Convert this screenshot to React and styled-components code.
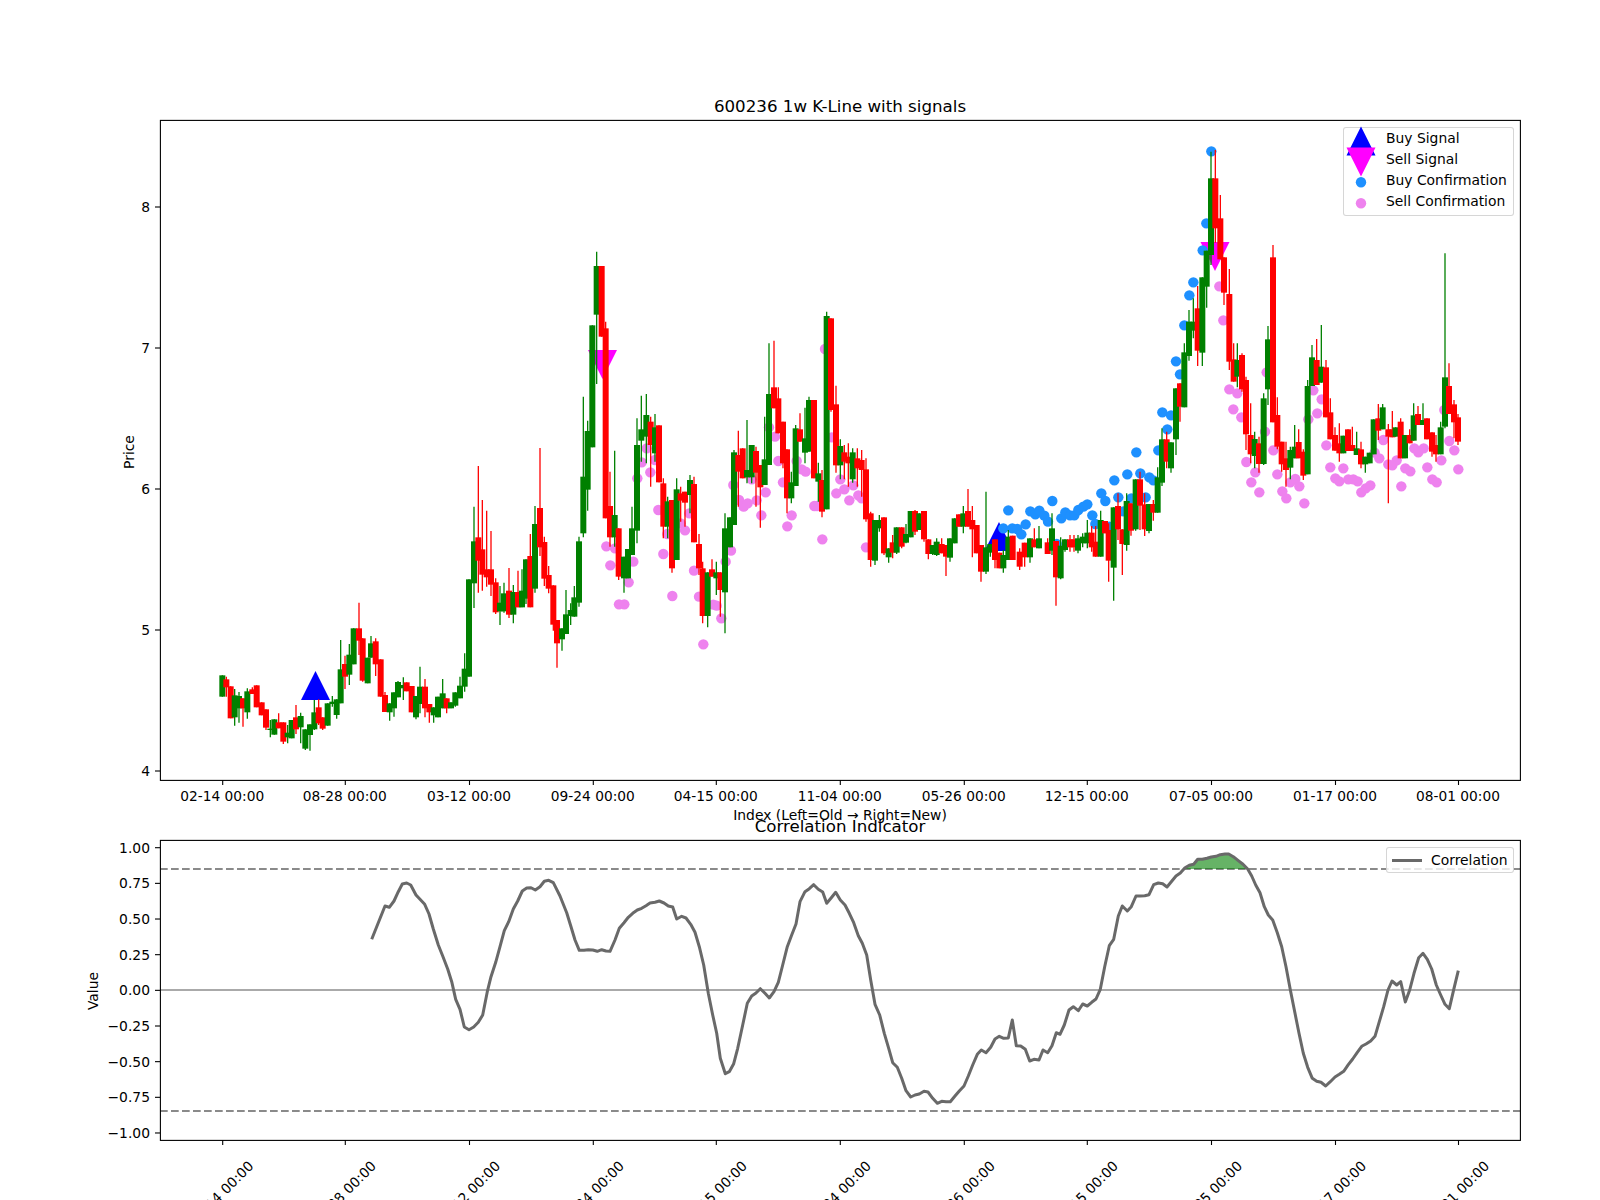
import styled, { createGlobalStyle } from "styled-components";

const GlobalStyle = createGlobalStyle`
html, body {
  margin: 0;
  padding: 0;
  background: #ffffff;
  overflow: hidden;
}
`

const Figure = styled.main`
display: flex;
flex-direction: column;
width: 1600px;
height: 1200px;
overflow: hidden;
background: #ffffff;
font-family: "DejaVu Sans", sans-serif;
`

const Panel = styled.section`
position: relative;
flex: none;
width: 1600px;
height: ${props => props.$height}px;
`

const ChartSvg = styled.svg`
display: block;
width: 1600px;
height: 100%;
overflow: visible;
`

const ChartText = styled.text`
font-family: "DejaVu Sans", sans-serif;
font-size: ${props => props.$size || 13.89}px;
text-anchor: ${props => props.$anchor || "middle"};
dominant-baseline: central;
fill: #000000;
`

const Legend = styled.div`
position: absolute;
top: ${props => props.$top}px;
left: ${props => props.$left}px;
box-sizing: border-box;
width: ${props => props.$width}px;
height: ${props => props.$h}px;
display: flex;
flex-direction: column;
background: rgba(255, 255, 255, 0.8);
border: 1px solid rgba(204, 204, 204, 0.8);
border-radius: 3px;
`

const LegendRow = styled.div`
display: flex;
align-items: center;
gap: ${props => props.$gap}px;
height: ${props => props.$rowHeight}px;
padding-left: ${props => props.$pad}px;
font-size: 13.89px;
line-height: 16px;
color: #000000;
white-space: nowrap;
`

const Swatch = styled.svg`
flex: none;
width: ${props => props.$w}px;
height: 21px;
overflow: visible;
`

// pixel readings of the candles: x color bodyTop bodyBottom wickTop wickBottom
const parseRows = (ox, oy, text) =>
  text.trim().split("\n").map(line => {
    const [x, c, t, b, wt, wb] = line.trim().split(" ");
    return {
      x: ox + x / 3,
      color: c === "g" ? "#008000" : "#ff0000",
      top: oy + t / 3,
      bottom: oy + b / 3,
      wickTop: oy + wt / 3,
      wickBottom: oy + wb / 3,
    };
  });

const candles = [
  ...parseRows(150, 480, `
217 g 586 650 586 650
229 r 598 622 590 650
242 r 619 715 619 715
254 g 646 712 627 737
267 g 648 685 636 728
279 r 655 685 655 740
292 g 634 697 625 716
307 r 628 642 622 642
320 r 616 682 616 682
335 r 667 706 667 706
348 r 688 743 688 750
361 g 746 750 720 772
373 g 718 764 718 764
386 r 727 745 700 745
400 r 727 785 727 792
413 g 758 772 735 790
425 g 720 775 720 775
438 r 712 748 675 762
452 g 708 742 698 790
466 g 748 806 748 810
480 g 733 765 733 812
493 g 697 748 660 750
506 r 682 730 658 735
518 r 712 746 712 750
533 g 670 737 670 737
547 g 665 672 648 680
560 g 658 705 658 716
572 g 568 670 480 670
585 r 552 590 527 627
598 g 524 584 492 615
611 g 445 553 445 553
627 r 445 482 368 525
638 r 475 602 475 605
653 g 533 610 533 610
663 g 490 533 468 533
677 r 484 553 475 588
692 r 538 650 538 650
705 r 645 696 636 696
719 g 670 697 670 722
732 g 637 685 637 710
744 g 606 652 603 652
760 g 615 625 592 660
770 r 607 634 607 634
785 r 618 697 618 697
798 g 648 712 648 718
810 g 620 672 560 700
825 r 620 685 597 712
838 r 672 697 672 728
851 g 682 706 682 728
864 g 650 712 650 712
878 g 640 685 597 685
890 r 655 685 655 700
903 g 667 685 667 685
916 g 637 677 637 680
930 g 617 655 590 655
944 g 566 620 520 635
957 g 298 590 298 590`),
  ...parseRows(450, 240, `
72 g 904 1030 800 1104
85 r 892 962 678 1058
97 r 928 1004 780 1052
110 r 988 1012 812 1040
123 r 988 1034 873 1068
137 r 1027 1117 1015 1122
150 g 1088 1114 1038 1155
162 g 1060 1114 1028 1118
177 r 1052 1124 984 1134
190 g 1056 1124 1035 1150
204 r 1056 1102 992 1102
216 g 1052 1102 988 1102
228 g 958 1076 958 1092
241 r 948 1102 882 1102
255 g 852 1046 798 1058
270 r 804 922 624 948
283 r 906 1016 890 1038
296 r 1005 1046 978 1060
310 r 1036 1154 1036 1172`),
  ...parseRows(550, 230, `
21 r 1170 1240 1170 1313
36 g 1195 1228 1195 1262
48 g 1153 1212 1080 1212
62 g 1140 1158 1120 1185
73 g 1102 1160 1068 1160
87 g 934 1118 920 1130
100 g 740 910 500 922
113 g 603 779 572 842
127 g 286 652 286 652
140 g 108 254 65 462
155 r 108 320 108 320
167 r 295 865 275 865
180 r 828 922 725 950
194 g 855 922 662 950
206 r 895 1040 895 1050
222 g 980 1045 980 1088
234 g 957 1045 957 1045
246 g 895 975 830 975
261 g 645 902 565 940
274 g 598 632 497 695
289 g 555 620 492 700
302 r 575 645 560 770
315 g 592 670 552 695
327 r 586 757 586 757
340 r 760 890 745 925
353 g 814 890 800 925
366 r 810 1015 810 1028
380 g 778 990 745 990
392 r 790 812 770 875
405 r 785 818 785 890
420 g 750 795 735 850
432 r 762 937 740 937
447 r 942 1015 912 1035
458 r 1015 1158 995 1180
473 g 1027 1158 1027 1192
486 r 1018 1040 988 1040
499 g 1027 1045 995 1095
511 r 1027 1080 1027 1160
525 g 895 1087 850 1210
540 g 862 952 862 952
552 g 667 885 660 885
565 r 675 725 602 830
578 r 655 745 655 745
591 g 720 742 570 760
605 g 645 742 645 760
618 r 663 728 650 830
631 r 705 772 705 893
644 g 688 765 560 765
657 g 492 705 340 705
672 r 472 535 332 535
685 r 505 610 472 610
699 r 575 700 575 715
711 r 658 805 658 850
724 g 757 805 725 820
737 g 595 768 585 768
750 r 598 635 550 635
765 g 625 668 533 700
777 g 510 665 500 665
792 r 510 745 510 745
805 g 730 755 698 815
816 r 750 845 720 862
830 g 258 838 245 838
843 r 265 540 265 545
858 r 523 706 467 728
871 g 648 706 628 748
883 r 667 695 645 748
895 r 680 700 640 770
908 g 667 748 655 758
922 r 685 715 655 770
935 r 690 720 660 800
948 r 718 868 685 875
962 r 850 990 845 1010
975 g 870 992 870 1005
988 g 870 895 855 905
1002 r 862 970 862 975
1016 g 955 982 955 998
1028 r 937 968 915 985
1040 g 892 968 892 972
1055 r 892 950 892 955
1068 g 912 938 882 940
1082 g 843 922 843 922
1095 r 843 905 840 915
1108 g 850 900 850 900
1122 r 843 928 843 935
1135 r 928 972 928 988
1148 g 945 972 945 975
1160 g 935 975 925 978
1175 r 942 970 925 970
1188 r 945 980 945 1038`),
  ...parseRows(950, 120, `
0 g 1255 1313 1255 1325
14 g 1195 1270 1195 1270
27 r 1183 1220 1183 1220
40 g 1180 1220 1158 1240
54 r 1173 1220 1107 1220
67 r 1200 1228 1158 1312
80 r 1215 1300 1215 1300
93 r 1275 1355 1275 1385
108 g 1282 1355 1115 1362
121 g 1272 1298 1272 1310
135 r 1258 1320 1258 1345
148 r 1298 1345 1298 1345
160 g 1305 1345 1290 1358
175 g 1250 1320 1230 1320
188 r 1247 1320 1247 1320
209 r 1295 1340 1285 1350
224 r 1268 1312 1268 1340
240 g 1255 1312 1255 1328
253 r 1258 1282 1225 1282
267 g 1255 1285 1218 1285`),
  ...parseRows(1040, 440, `
23 r 307 342 295 342
36 g 265 332 220 345
48 r 303 412 303 497
62 g 317 415 292 418
75 g 298 330 298 335
90 r 298 322 285 335
102 r 298 322 285 335
114 g 295 332 285 340
128 g 290 310 280 322
142 g 278 310 240 325
155 r 278 322 258 335
167 r 305 350 258 350
182 g 240 350 212 350
195 r 243 280 243 280
206 r 270 362 250 425
221 g 202 383 202 482
234 r 198 268 160 300
247 r 268 312 268 405
260 g 183 315 160 332
273 r 190 272 190 287
287 g 118 268 118 272
300 r 118 197 95 270
314 r 193 268 160 288
327 g 192 273 192 280
340 r 192 218 180 242
353 g 112 218 82 218`),
  ...parseRows(950, 120, `
636 g 958 1088 925 1098
650 r 958 1025 935 1045
663 g 967 1045 967 1058
678 g 805 958 805 1005
690 r 790 860 790 905
703 g 697 862 670 862
717 g 605 708 570 722
730 g 605 632 535 655
743 r 565 692 498 738
757 g 472 698 472 738
770 g 392 500 392 563
783 g 175 405 95 435
796 r 175 325 90 368
811 r 295 418 225 418
822 r 412 518 412 555
838 r 522 725 447 750
851 r 718 785 670 785`),
  ...parseRows(1200, 110, `
112 g 750 800 700 832
126 r 735 838 730 845
138 r 810 973 800 1020
152 r 975 1033 880 1060
164 g 987 1038 965 1075
177 r 1000 1062 980 1088
191 g 865 1062 850 1065
204 g 688 838 648 885
219 r 442 937 405 937
232 r 915 1010 862 1018
245 r 995 1063 995 1085
258 r 1045 1080 995 1130
271 g 1020 1073 1010 1108
284 g 1010 1045 945 1045
296 r 996 1045 958 1045
310 r 1025 1097 1018 1110
323 g 828 1093 810 1093
336 g 742 828 705 828
350 r 750 825 687 825
364 g 770 818 645 818
378 r 772 922 750 922
391 r 907 988 865 988
405 r 975 1022 952 1022
418 r 1000 1030 940 1055
430 g 977 1030 977 1030
444 r 958 1023 958 1023
457 r 1005 1023 950 1023
470 g 1015 1035 965 1035
483 r 1018 1063 995 1075
496 g 1040 1063 1040 1088
509 g 1028 1060 1028 1060
521 g 928 1033 928 1033
535 r 925 962 882 990
548 g 892 958 882 958
565 r 958 980 942 1180
577 r 958 982 903 982
587 g 952 980 952 980
602 r 935 1045 925 1045
615 g 975 1045 975 1045
629 r 975 1000 958 1000
641 g 916 992 880 992
654 r 912 945 888 945
669 g 930 945 880 945
681 r 925 988 925 988
696 r 967 1025 967 1040
708 r 1005 1033 975 1055
722 g 952 1033 935 1033
735 g 802 950 430 955
747 r 828 912 760 912
762 r 883 937 870 985
774 r 922 995 912 1005`),
];

const parsePoints = (ox, oy, text) =>
  text.trim().split(/\s+/).map(pair => {
    const [x, y] = pair.split(",");
    return [ox + x / 3, oy + y / 3];
  });

const sellDots = [
  ...parsePoints(550, 230, `169,949 181,1006 195,955 207,1123 223,1123 236,1057 250,995 262,745 275,697 290,655 301,727 315,690 325,840 340,972 352,912 367,1098 392,880 405,901 418,850 432,1022 447,1100 460,1243 490,1124 500,1127 514,1165 527,995 543,962 550,765 567,810 581,830 593,820 605,748 620,811 634,856 647,787 657,592 675,620 685,693 699,757 712,889 725,856 740,693 755,718 767,725 793,828 801,828 817,928 825,357 845,622 859,790 871,748 883,778 898,811 910,766 925,796 935,805 948,952`),
  ...parsePoints(1200, 110, `58,529 70,631 88,838 112,850 100,898 124,922 139,1056 166,1087 154,1117 178,1147 195,965 200,787 220,1021 232,1093 247,1144 259,1165 271,1117 286,1107 298,1129 313,1180 325,928 340,841 352,910 365,868 379,1006 391,1072 406,1105 418,1114 430,1075 445,1108 460,1108 473,1114 484,1147 497,1135 511,1126 524,1028 538,1045 550,990 565,1063 577,1066 590,1051 604,1129 616,1075 631,1084 643,1015 655,1027 671,1015 682,1072 697,1108 710,1117 724,1051 733,900 748,993 763,1021 775,1078`),
];

const buyDots = parsePoints(950, 120, `175,1171 160,1225 187,1225 202,1227 214,1243 227,1213 241,1174 256,1183 268,1172 283,1187 294,1205 307,1143 320,1272 334,1195 346,1177 360,1186 373,1186 385,1170 400,1160 412,1153 427,1186 436,1212 454,1120 466,1143 478,1220 493,1081 505,1132 520,1174 532,1063 544,1135 559,997 571,1060 587,1132 598,1072 610,1081 625,991 637,877 652,928 663,886 678,724 690,763 703,616 718,526 730,487 758,391 769,310 784,94`);

const correlation = [
  ...parsePoints(60, 770, `935,508 950,470 975,408 988,412 1002,393 1015,365 1027,342 1040,339 1052,345 1068,375 1080,388 1094,403 1107,432 1120,477 1135,525 1148,558 1163,597 1175,635 1187,688 1200,718 1213,771 1227,779 1241,771 1255,757 1268,735 1282,665 1293,620 1307,577 1320,530 1333,482 1346,455 1360,417 1373,393 1387,363 1400,354 1413,353 1426,360 1440,350 1453,334 1466,331 1480,338`),
  ...parsePoints(560, 770, `0,378 20,428 33,470 45,510 58,541 72,541 85,539 98,540 112,544 125,539 138,543 150,544 165,510 178,475 192,458 205,442 218,430 232,420 245,415 258,407 270,399 285,397 298,393 312,399 325,408 338,411 350,447 365,439 378,444 392,463 405,487 418,530 431,585 445,670 458,735 470,790 481,865 496,911 508,905 521,881 533,835 548,765 562,700 575,678 588,669 601,656 615,670 628,684 642,665 655,637 668,585 682,530 695,495 708,462 720,395 735,365 748,356 761,344 775,358 788,366 800,400 814,383 827,367 841,390 855,405 868,430 881,458 895,497 907,520 920,555 932,630 945,703 959,735 973,790 986,835 998,878 1012,892 1025,925 1038,962 1052,981 1065,975 1078,972 1092,964 1104,966 1118,985 1132,1000 1145,994 1158,995 1171,995 1185,978 1198,963 1212,948 1225,918 1238,885 1252,853 1264,840 1278,848 1292,832 1305,807 1318,799 1331,805 1345,804 1357,750 1369,827 1382,828 1396,838 1409,873 1422,868 1437,870 1449,840 1463,848 1476,827 1489,788`),
  ...parsePoints(1060, 770, `0,793 13,765 27,720 40,710 55,722 68,702 82,708 95,697 108,687 121,658 134,590 148,527 161,508 175,438 187,408 202,423 214,410 228,378 241,378 254,377 267,374 281,344 295,339 308,341 321,351 335,334 348,318 361,309 375,293 388,286 401,283 413,268 427,268 441,265 454,261 468,259 481,254 495,252 506,252 520,260 535,272 549,283 563,297 575,318 587,345 600,368 613,410 625,435 638,450 652,488 665,530 678,590 692,665 705,730 717,790 730,850 743,892 757,925 770,934 783,937 797,948 811,935 825,921 838,913 851,904 865,884 878,867 892,847 905,829 918,822 932,813 945,799 958,755 971,710 984,660 996,633 1010,645 1022,635 1036,696 1049,660 1062,610 1076,563 1089,550 1102,568 1115,597 1129,645 1142,675 1155,703 1168,716 1182,655 1195,602`),
];

const toPath = points => points.map(p => `${p[0].toFixed(1)},${p[1].toFixed(1)}`).join(" ");

const overThreshold = correlation.filter(p => p[1] <= 869);
const fillPoints = [
  [overThreshold[0][0], 869],
  ...overThreshold,
  [overThreshold[overThreshold.length - 1][0], 869],
];

const xTicks = [
  [222.7, "02-14"], [345.3, "08-28"], [469.5, "03-12"], [593.3, "09-24"],
  [716.3, "04-15"], [840.3, "11-04"], [964.3, "05-26"], [1087.3, "12-15"],
  [1211.5, "07-05"], [1335.5, "01-17"], [1458.5, "08-01"],
];

const priceTicks = [4, 5, 6, 7, 8];
const valueTicks = ["1.00", "0.75", "0.50", "0.25", "0.00", "−0.25", "−0.50", "−0.75", "−1.00"];

const priceY = p => 771 - 141 * (p - 4);
const valueY = i => 847.7 + 35.66 * i;

function UpTriangle({ cx, top }) {
  return <polygon points={`${cx},${top} ${cx + 14.5},${top + 29} ${cx - 14.5},${top + 29}`} fill="#0000ff" />;
}

function DownTriangle({ cx, top }) {
  return <polygon points={`${cx - 14.5},${top} ${cx + 14.5},${top} ${cx},${top + 29}`} fill="#ff00ff" />;
}

function PriceChart() {
  return (
    <Panel $height={825}>
      <ChartSvg viewBox="0 0 1600 825">
        <ChartText x={840} y={106} $size={16.67}>600236 1w K-Line with signals</ChartText>

        <UpTriangle cx={315.5} top={671} />
        <UpTriangle cx={999} top={522} />
        <DownTriangle cx={602.5} top={350} />
        <DownTriangle cx={1215} top={242} />

        {sellDots.map((d, i) => <circle key={i} cx={d[0]} cy={d[1]} r={5.2} fill="#ee82ee" />)}
        {buyDots.map((d, i) => <circle key={i} cx={d[0]} cy={d[1]} r={5.2} fill="#1e90ff" />)}

        {candles.map((c, i) => (
          <g key={i} fill={c.color}>
            <line x1={c.x} x2={c.x} y1={c.wickTop} y2={c.wickBottom} stroke={c.color} strokeWidth={1.3} />
            <rect x={c.x - 3} y={c.top} width={6} height={c.bottom - c.top} />
          </g>
        ))}

        <rect x={160.4} y={120.4} width={1360} height={660} fill="none" stroke="#000000" strokeWidth={1.1} />

        {priceTicks.map(p => (
          <g key={p}>
            <line x1={155} x2={160} y1={priceY(p)} y2={priceY(p)} stroke="#000000" strokeWidth={1.1} />
            <ChartText x={150} y={priceY(p) + 0.4} $anchor="end">{p}</ChartText>
          </g>
        ))}
        {xTicks.map(([x, label]) => (
          <g key={x}>
            <line x1={x} x2={x} y1={780} y2={785} stroke="#000000" strokeWidth={1.1} />
            <ChartText x={x - 0.5} y={796} $size={13.75}>{label} 00:00</ChartText>
          </g>
        ))}

        <ChartText x={128.5} y={452} transform="rotate(-90 128.5 452)">Price</ChartText>
        <ChartText x={840} y={815}>Index (Left=Old → Right=New)</ChartText>
      </ChartSvg>

      <Legend $top={126.5} $left={1342.5} $width={171} $h={89}>
        <LegendRow $rowHeight={21} $pad={3.5} $gap={11}>
          <Swatch $w={28} viewBox="0 0 28 21"><polygon points="14,-1.5 28.5,27.5 -0.5,27.5" fill="#0000ff" /></Swatch>
          Buy Signal
        </LegendRow>
        <LegendRow $rowHeight={21} $pad={3.5} $gap={11}>
          <Swatch $w={28} viewBox="0 0 28 21"><polygon points="-0.5,-1.5 28.5,-1.5 14,27.5" fill="#ff00ff" /></Swatch>
          Sell Signal
        </LegendRow>
        <LegendRow $rowHeight={21} $pad={3.5} $gap={11}>
          <Swatch $w={28} viewBox="0 0 28 21"><circle cx={14} cy={12.2} r={5.2} fill="#1e90ff" /></Swatch>
          Buy Confirmation
        </LegendRow>
        <LegendRow $rowHeight={21} $pad={3.5} $gap={11}>
          <Swatch $w={28} viewBox="0 0 28 21"><circle cx={14} cy={12.2} r={5.2} fill="#ee82ee" /></Swatch>
          Sell Confirmation
        </LegendRow>
      </Legend>
    </Panel>
  );
}

function CorrelationChart() {
  return (
    <Panel $height={375}>
      <ChartSvg viewBox="0 825 1600 375">
        <ChartText x={840} y={826} $size={16.67}>Correlation Indicator</ChartText>

        <line x1={160} x2={1520} y1={869} y2={869} stroke="#8a8a8a" strokeWidth={2.1} strokeDasharray="7.7 3.3" />
        <line x1={160} x2={1520} y1={1111} y2={1111} stroke="#8a8a8a" strokeWidth={2.1} strokeDasharray="7.7 3.3" />
        <line x1={160} x2={1520} y1={990} y2={990} stroke="#aaaaaa" strokeWidth={2.2} />

        <polygon points={toPath(fillPoints)} fill="#008000" opacity={0.6} />
        <polyline points={toPath(correlation)} fill="none" stroke="#696969" strokeWidth={3} strokeLinejoin="round" />

        <rect x={160.4} y={840.4} width={1360} height={300} fill="none" stroke="#000000" strokeWidth={1.1} />

        {valueTicks.map((label, i) => (
          <g key={label}>
            <line x1={155} x2={160} y1={valueY(i)} y2={valueY(i)} stroke="#000000" strokeWidth={1.1} />
            <ChartText x={150} y={valueY(i)} $anchor="end">{label}</ChartText>
          </g>
        ))}
        {xTicks.map(([x, label]) => (
          <g key={x}>
            <line x1={x} x2={x} y1={1140} y2={1145} stroke="#000000" strokeWidth={1.1} />
            <ChartText x={x - 1.5} y={1193} $size={13.75} transform={`rotate(-45 ${x - 1.5} 1193)`}>{label} 00:00</ChartText>
          </g>
        ))}

        <ChartText x={93} y={991} transform="rotate(-90 93 991)">Value</ChartText>
      </ChartSvg>

      <Legend $top={22} $left={1386} $width={128} $h={26}>
        <LegendRow $rowHeight={24} $pad={5} $gap={9}>
          <Swatch $w={30} viewBox="0 0 30 21"><line x1={0} x2={30} y1={10.5} y2={10.5} stroke="#696969" strokeWidth={3} /></Swatch>
          Correlation
        </LegendRow>
      </Legend>
    </Panel>
  );
}

export default function App() {
  return (
    <>
      <GlobalStyle />
      <Figure>
        <PriceChart />
        <CorrelationChart />
      </Figure>
    </>
  );
}
